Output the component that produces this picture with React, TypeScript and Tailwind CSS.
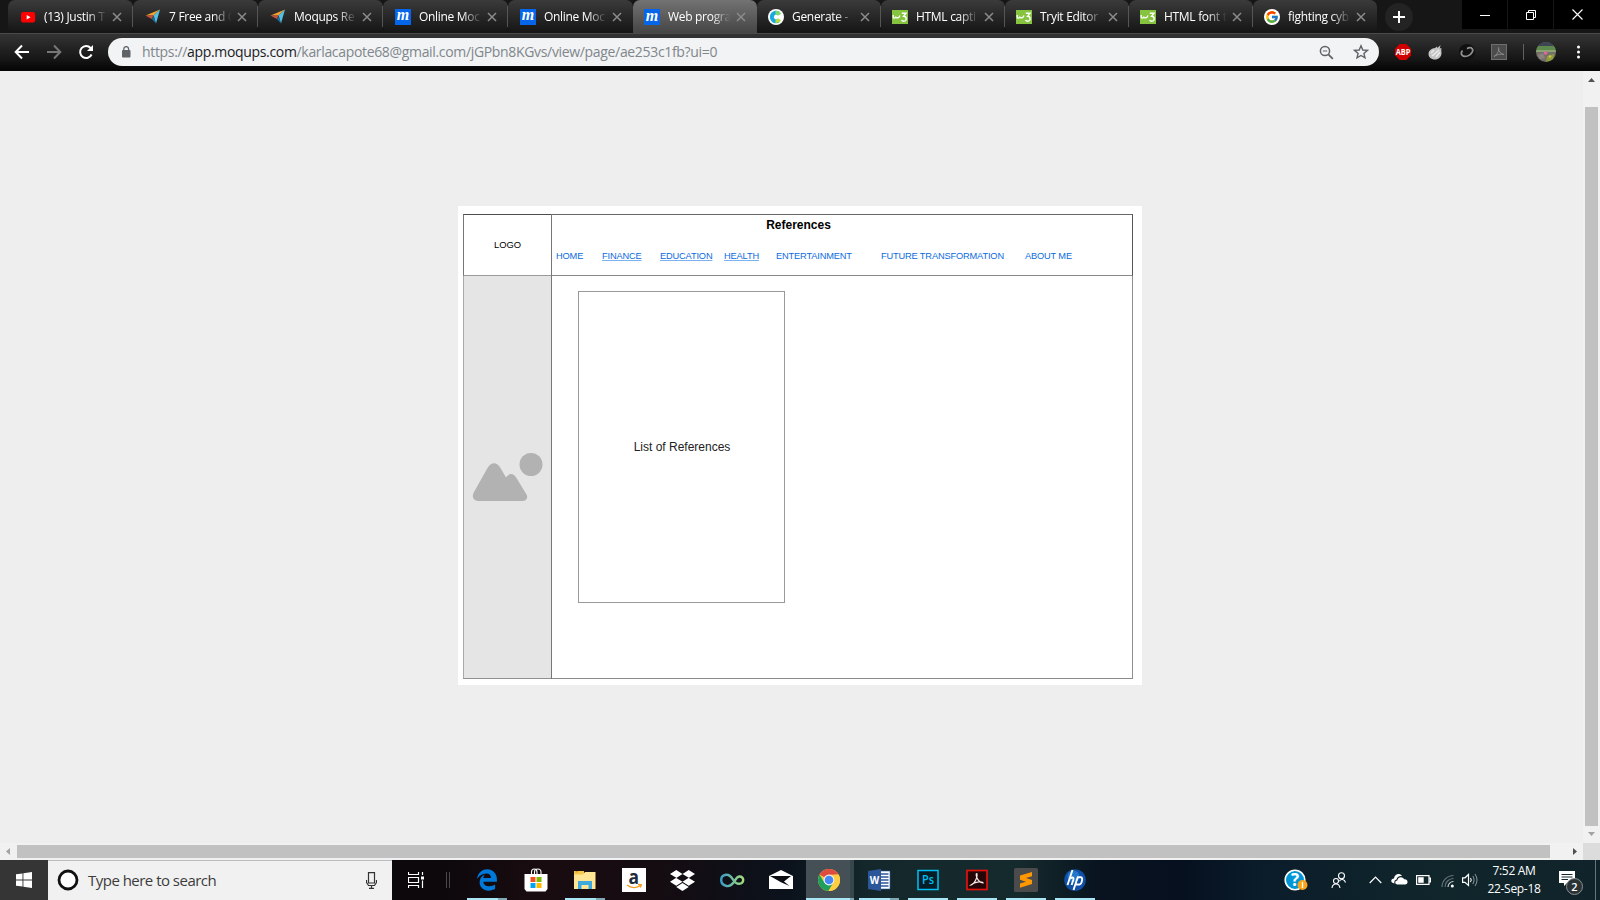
import React from 'react';
import { FaDropbox } from 'react-icons/fa';
import { FaEdgeLegacy } from 'react-icons/fa6';
import { FcGoogle } from 'react-icons/fc';

const UI = "font-['Open_Sans','Noto_Sans',sans-serif]";

function YouTube() {
  return (
    <svg width="16" height="16" viewBox="0 0 16 16">
      <rect x="1" y="3" width="14.2" height="10.6" rx="2.4" fill="#f00" />
      <path d="M6.7 6 L10.6 8.3 L6.7 10.6Z" fill="#fff" />
    </svg>
  );
}

function Plane() {
  return (
    <svg width="16" height="16" viewBox="0 0 16 16">
      <path d="M0.5 6.5 L15 0.5 L8.5 6.5Z" fill="#f5a033" />
      <path d="M0.5 6.5 L8.5 6.5 L6.8 10Z" fill="#c9513a" />
      <path d="M15 0.5 L8.5 6.5 L9 8 L11 14.5Z" fill="#52c0e4" />
      <path d="M9 7.5 L6.8 10 L11 14.5Z" fill="#1c6f9c" />
    </svg>
  );
}

function Moqups() {
  return (
    <span className="flex size-4 items-center justify-center bg-[#0566ea] pb-[3px] font-['Liberation_Serif',serif] text-[16px] leading-none font-bold text-white italic">
      m
    </span>
  );
}

function Generate() {
  return (
    <svg width="16" height="16" viewBox="0 0 16 16">
      <circle cx="8" cy="8" r="8" fill="#fff" />
      <path d="M10.5 4.4 A4.3 4.3 0 1 0 10.5 11.6" fill="none" stroke="#19a9e0" strokeWidth="4" />
      <path d="M7.5 3.8 A4.3 4.3 0 0 1 11.6 5.8" fill="none" stroke="#7fd86a" strokeWidth="4" />
      <path d="M7.5 12.2 A4.3 4.3 0 0 0 11.6 10.2" fill="none" stroke="#b9dd3c" strokeWidth="3.6" />
    </svg>
  );
}

function W3() {
  return (
    <svg width="16" height="16" viewBox="0 0 16 16">
      <rect y="1" width="16" height="14" fill="#86c440" />
      <path d="M1.2 6 V8 C1.2 9.6 3.6 9.6 3.8 7.5 C4.1 9.6 6.8 9.6 8 6.5" fill="none" stroke="#fff" strokeWidth="1.3" />
      <path d="M9.8 4.2 H14 L11.6 7.2 C15 7.2 15 12.2 11.8 12.2 C10.7 12.2 10 11.8 9.6 11" fill="none" stroke="#fff" strokeWidth="1.4" />
    </svg>
  );
}

function Google() {
  return (
    <span className="flex size-4 items-center justify-center rounded-full bg-white">
      <FcGoogle size={14} />
    </span>
  );
}

const tabs = [
  { icon: <YouTube />, title: '(13) Justin T' },
  { icon: <Plane />, title: '7 Free and C' },
  { icon: <Plane />, title: 'Moqups Re' },
  { icon: <Moqups />, title: 'Online Moc' },
  { icon: <Moqups />, title: 'Online Moc' },
  { icon: <Moqups />, title: 'Web progra', active: true },
  { icon: <Generate />, title: 'Generate -' },
  { icon: <W3 />, title: 'HTML capti' },
  { icon: <W3 />, title: 'Tryit Editor' },
  { icon: <W3 />, title: 'HTML font t' },
  { icon: <Google />, title: 'fighting cyb' },
];

function Tab({ icon, title, active, wide, sep }: { icon: React.ReactNode; title: string; active?: boolean; wide: boolean; sep: boolean }) {
  return (
    <div
      className={
        'flex shrink-0 items-center rounded-t-[7px] ' +
        (wide ? 'w-[125px] pl-3 ' : 'w-[124px] pl-[11px] ') +
        (active ? 'h-[34px] bg-linear-to-b from-[#737373] to-[#444]' : 'h-[33px] rounded-b-[7px] bg-linear-to-b from-[#3b3b3b] to-[#151515]')
      }
    >
      <span className="flex w-4 shrink-0">{icon}</span>
      <span className="ml-2 w-[64px] mask-r-from-68% mask-r-to-98% text-[12px] leading-4 tracking-[-0.3px] whitespace-nowrap text-white">
        {title}
      </span>
      <svg className="ml-1 shrink-0" width="10" height="10" viewBox="0 0 10 10">
        <path d="M1 1 L9 9 M9 1 L1 9" stroke="#8c8c8c" strokeWidth="1.5" />
      </svg>
      <span className={'ml-auto w-px ' + (sep ? 'h-[21px] bg-[#555]' : '')} />
    </div>
  );
}

function TabStrip() {
  return (
    <div className="flex h-[33px] bg-[#161616] pl-2">
      {tabs.map((t, i) => (
        <Tab key={i} icon={t.icon} title={t.title} active={t.active} wide={i < 5} sep={i !== 4 && i !== 5 && i !== 10} />
      ))}
      <div className="mt-[3px] ml-2 flex size-7 items-center justify-center rounded-full bg-[#232323]">
        <svg width="12" height="12" viewBox="0 0 12 12">
          <path d="M6 0 V12 M0 6 H12" stroke="#fff" strokeWidth="2" />
        </svg>
      </div>
      <div className="ml-auto flex h-[29px] gap-px">
        <div className="flex w-[45px] items-center justify-center bg-black">
          <svg width="10" height="10" viewBox="0 0 10 10">
            <path d="M0 5.5 H10" stroke="#fff" />
          </svg>
        </div>
        <div className="flex w-[45px] items-center justify-center bg-black">
          <svg width="10" height="10" viewBox="0 0 10 10">
            <path d="M0.5 2.5 H7.5 V9.5 H0.5Z M2.5 2.5 V0.5 H9.5 V7.5 H7.5" fill="none" stroke="#fff" />
          </svg>
        </div>
        <div className="flex w-[46px] items-center justify-center bg-black">
          <svg width="11" height="11" viewBox="0 0 11 11">
            <path d="M0.5 0.5 L10.5 10.5 M10.5 0.5 L0.5 10.5" stroke="#fff" strokeWidth="1.1" />
          </svg>
        </div>
      </div>
    </div>
  );
}

function Toolbar() {
  return (
    <div className="flex h-[38px] items-center border-t border-[#4a4a4a] bg-linear-to-b from-[#323232] from-5% via-[#151515] via-70% to-[#050505] pb-px pl-[14px]">
      <svg width="16" height="16" viewBox="0 0 16 16">
        <path d="M15 8 H2 M8 1.5 L1.7 8 L8 14.5" fill="none" stroke="#fff" strokeWidth="2" />
      </svg>
      <svg className="ml-4" width="16" height="16" viewBox="0 0 16 16">
        <path d="M1 8 H14 M8 1.5 L14.3 8 L8 14.5" fill="none" stroke="#777" strokeWidth="2" />
      </svg>
      <svg className="ml-4" width="16" height="16" viewBox="0 0 16 16">
        <path d="M13.6 10.5 A6 6 0 1 1 12.6 4" fill="none" stroke="#fff" strokeWidth="2" />
        <path d="M15 1 V7 H9Z" fill="#fff" />
      </svg>
      <div className="ml-[14px] flex h-7 w-[1271px] items-center rounded-full bg-[#f1f3f4] pl-[13px]">
        <svg width="10" height="12" viewBox="0 0 10 12">
          <rect x="1" y="4" width="8.5" height="7.5" rx="1" fill="#5f6368" />
          <path d="M2.8 4.5 V3 A2.4 2.4 0 0 1 7.6 3 V4.5" fill="none" stroke="#5f6368" strokeWidth="1.3" />
        </svg>
        <span className="ml-[11px] text-[14px] leading-5 tracking-[-0.333px] whitespace-nowrap text-[#80868b]">
          https://<span className="text-[#202124]">app.moqups.com</span>/karlacapote68@gmail.com/jGPbn8KGvs/view/page/ae253c1fb?ui=0
        </span>
        <svg className="ml-auto" width="15" height="15" viewBox="0 0 15 15">
          <circle cx="6" cy="6" r="4.6" fill="none" stroke="#5f6368" strokeWidth="1.5" />
          <path d="M9.3 9.3 L13.8 13.8" stroke="#5f6368" strokeWidth="1.8" />
          <path d="M3.8 6 H8.2" stroke="#5f6368" />
        </svg>
        <svg className="mr-[10px] ml-[19px]" width="16" height="16" viewBox="0 0 16 16">
          <path d="M8 1.8 L9.8 6 L14.4 6.4 L10.9 9.4 L12 13.9 L8 11.5 L4 13.9 L5.1 9.4 L1.6 6.4 L6.2 6Z" fill="none" stroke="#5f6368" strokeWidth="1.4" />
        </svg>
      </div>
      <div className="ml-4 flex items-center">
        <svg width="16" height="16" viewBox="0 0 16 16">
          <path d="M4.7 0 H11.3 L16 4.7 V11.3 L11.3 16 H4.7 L0 11.3 V4.7Z" fill="#d00000" />
          <text x="8" y="11" textAnchor="middle" fontSize="8" fontWeight="bold" fill="#fff" textLength="14.6" lengthAdjust="spacingAndGlyphs" fontFamily="Open Sans, sans-serif">ABP</text>
        </svg>
        <svg className="ml-4" width="16" height="16" viewBox="0 0 16 16">
          <path d="M1.5 10 C1.5 6 5 4.5 8 4 L10 2.5 L10.5 4 L13.5 1 L12.8 4.5 L14.5 4 C14 6 14.5 7 14.5 9 C14.5 13 11.5 15.5 8 15.5 C4 15.5 1.5 13 1.5 10Z" fill="#c4c4c4" />
          <path d="M4 9 L7 6 M5 12 L12 6 M9 13 L13 8" stroke="#ececec" strokeWidth="1.4" />
        </svg>
        <svg className="ml-4" width="16" height="16" viewBox="0 0 16 16">
          <circle cx="8" cy="8" r="8" fill="#101010" />
          <path d="M3.5 6.5 C0.5 10 3.5 13.5 8.5 12 C13.5 10.3 15.2 5.5 12.4 3.9 C10.8 3.2 9.2 3.8 8 4.7" fill="none" stroke="#909090" strokeWidth="1.7" />
        </svg>
        <svg className="ml-4" width="16" height="16" viewBox="0 0 16 16">
          <rect x="0.5" y="0.5" width="15" height="15" fill="#4c4c4c" stroke="#6e6e6e" />
          <path d="M3 12.5 C6 11 8.3 6.5 7.7 3.5 C7 3.5 7.5 9.5 13 10.5 C10 9.3 5 10.8 3 12.5" fill="none" stroke="#8b8b8b" />
        </svg>
        <span className="ml-4 h-4 w-px bg-[#606060]" />
        <svg className="ml-3" width="20" height="20" viewBox="0 0 20 20">
          <clipPath id="avatar">
            <circle cx="10" cy="10" r="10" />
          </clipPath>
          <g clipPath="url(#avatar)">
            <rect width="20" height="20" fill="#77706a" />
            <rect width="20" height="4" fill="#3d4454" />
            <rect y="4" width="20" height="4.5" fill="#5d8a4c" />
            <path d="M0 8 H20 V10 H0Z" fill="#8aa374" />
            <path d="M2 13 L7 11 L9 16 L4 17Z" fill="#8c8480" />
            <path d="M11 14 L18 12 L17 18 L10 20Z" fill="#8c9c3c" />
            <circle cx="9.5" cy="11" r="1.8" fill="#e0699b" />
            <circle cx="14" cy="14.5" r="1.3" fill="#d3c445" />
          </g>
        </svg>
        <svg className="ml-5" width="5" height="14" viewBox="0 0 5 14">
          <circle cx="2.5" cy="2" r="1.5" fill="#fff" />
          <circle cx="2.5" cy="7" r="1.5" fill="#fff" />
          <circle cx="2.5" cy="12" r="1.5" fill="#fff" />
        </svg>
      </div>
    </div>
  );
}

function Wireframe() {
  return (
    <div className="h-[479px] w-[684px] bg-white pt-[8px] pl-[5px] font-['Liberation_Sans',sans-serif] text-black">
      <div className="flex h-[465px] w-[670px]">
        <div className="flex w-[88px] flex-col">
          <div className="flex h-[62px] items-center justify-center border-t border-b border-l border-t-[#4d4d4d] border-b-[#999] border-l-[#777] text-[9.4px]">
            <span>LOGO</span>
          </div>
          <div className="flex-1 border-b border-l border-b-[#8f8f8f] border-l-[#aaa] bg-[#e5e5e5] pt-[176px] pl-[7px]">
            <svg width="72" height="50" viewBox="0 0 72 50">
              <circle cx="60" cy="12.5" r="11.5" fill="#b2b2b2" />
              <path d="M8 49 C2 49 0.5 44.5 3 40 L16.5 16 C20 9.5 26 9.5 29.5 16 L35 25.5 C38.5 20.5 42.5 21 45.5 26 L55.5 42.5 C57.5 46 55 49 51.5 49Z" fill="#b2b2b2" />
            </svg>
          </div>
        </div>
        <div className="flex w-[582px] shrink-0 flex-col border-l border-[#777]">
          <div className="h-[62px] border-t border-r border-b border-t-[#666] border-r-[#555] border-b-[#888]">
            <div className="pt-[3px] pr-[87px] text-center text-[12px] leading-[14px] font-bold">References</div>
            <div className="mt-[19px] flex text-[9.25px] leading-[11px] tracking-[-0.15px] whitespace-nowrap text-[#0a6be0] [&>span]:shrink-0">
              <span className="ml-1 w-[46px]">HOME</span>
              <span className="w-[58px] underline decoration-[#7db2f0]">FINANCE</span>
              <span className="w-[64px] underline decoration-[#7db2f0]">EDUCATION</span>
              <span className="w-[52px] underline decoration-[#7db2f0]">HEALTH</span>
              <span className="w-[105px]">ENTERTAINMENT</span>
              <span className="w-[144px]">FUTURE TRANSFORMATION</span>
              <span>ABOUT ME</span>
            </div>
          </div>
          <div className="flex-1 border-r border-b border-r-[#8f8f8f] border-b-[#8a8a8a] pt-[15px] pl-[26px]">
            <div className="flex h-[312px] w-[207px] items-center justify-center border border-[#999] pl-px text-[12px] text-[#222]">
              <span>List of References</span>
            </div>
          </div>
        </div>
      </div>
    </div>
  );
}

function Viewport() {
  return (
    <div className="flex h-[789px] flex-col">
      <div className="flex h-[772px]">
        <div className="flex-1 bg-[#eee] pt-[135px] pl-[458px]">
          <Wireframe />
        </div>
        <div className="flex w-[17px] flex-col items-center bg-[#f1f1f1]">
          <svg width="17" height="36" viewBox="0 0 17 36">
            <path d="M5 11 L8.5 7 L12 11Z" fill="#505050" />
          </svg>
          <div className="h-[719px] w-[13px] bg-[#c1c1c1]" />
          <svg width="17" height="17" viewBox="0 0 17 17">
            <path d="M5 6 L8.5 10 L12 6Z" fill="#a3a3a3" />
          </svg>
        </div>
      </div>
      <div className="flex h-[17px] items-center bg-[#f1f1f1]">
        <svg width="17" height="17" viewBox="0 0 17 17">
          <path d="M10 5 L6 8.5 L10 12Z" fill="#a3a3a3" />
        </svg>
        <div className="h-[13px] w-[1533px] bg-[#c1c1c1]" />
        <svg className="ml-4" width="17" height="17" viewBox="0 0 17 17">
          <path d="M7 5 L11 8.5 L7 12Z" fill="#505050" />
        </svg>
        <div className="h-[17px] w-[17px] bg-[#dcdcdc]" />
      </div>
    </div>
  );
}

function Store() {
  return (
    <svg width="24" height="24" viewBox="0 0 24 24">
      <path d="M7.5 8 V4 C7.5 0 13 0 13 4 V8 M10.5 6 V4 C10.5 0 17 0 17 4 V7" fill="none" stroke="#fff" strokeWidth="1.1" />
      <path d="M0.5 6 H23.5 V21 L21.5 23.5 H2.5 L0.5 21Z" fill="#fff" />
      <path d="M6.5 9 H11.5 V14 H6.5Z" fill="#f25022" />
      <path d="M12.5 9 H17.5 V14 H12.5Z" fill="#7fba00" />
      <path d="M6.5 15 H11.5 V20 H6.5Z" fill="#00a4ef" />
      <path d="M12.5 15 H17.5 V20 H12.5Z" fill="#ffb900" />
    </svg>
  );
}

function Explorer() {
  return (
    <svg width="24" height="24" viewBox="0 0 24 24">
      <path d="M1 3 H11 V5 H22 V21 H1Z" fill="#f5c84c" />
      <path d="M1 6.5 H10 L12 4 H22.5 V21 H1Z" fill="#ffe594" />
      <path d="M2.5 3.8 H5" stroke="#d78e12" />
      <path d="M5 21 V13 H19 V21 H15.5 V17 H8.5 V21Z" fill="#3da9dd" />
    </svg>
  );
}

function Amazon() {
  return (
    <svg width="24" height="24" viewBox="0 0 24 24">
      <rect width="24" height="24" fill="#fff" />
      <text x="11.8" y="15.5" textAnchor="middle" fontSize="20" fontWeight="bold" fill="#1d2b3a" textLength="10.5" lengthAdjust="spacingAndGlyphs" fontFamily="Open Sans, sans-serif">a</text>
      <path d="M5 17 C9 20.3 15 20.3 18.5 17.6 M16 16.5 L19.3 16.8 L18.3 19.5" fill="none" stroke="#f79a1c" strokeWidth="1.3" />
    </svg>
  );
}

function InfinityLoop() {
  return (
    <svg width="26" height="24" viewBox="0 0 26 24">
      <defs>
        <linearGradient id="inf" x1="0" x2="1">
          <stop offset="0" stopColor="#3c9dc4" />
          <stop offset="1" stopColor="#a3dc7d" />
        </linearGradient>
      </defs>
      <path d="M14.5 14.5 C12 18 9 18.3 7.5 18 C0.5 16.5 0.5 7.5 7 6.8 C14 6 13.5 16 20 15.8 C25.5 15.5 25.5 8.5 20.5 8.5 C17.5 8.5 16.5 12 14.5 14.5Z" fill="none" stroke="url(#inf)" strokeWidth="2.4" />
    </svg>
  );
}

function Mail() {
  return (
    <svg width="24" height="24" viewBox="0 0 24 24">
      <path d="M0 8 L12 2 L24 8 V21 H0Z" fill="#fff" />
      <path d="M1 8 H22 L15 13.5 L20.5 18 L12 14.3Z" fill="#0c0d14" />
    </svg>
  );
}

function Chrome() {
  return (
    <svg className="ml-[3px]" width="22" height="22" viewBox="0 0 22 22">
      <circle cx="11" cy="11" r="11" fill="#ffcd40" />
      <path d="M11 11 L1.5 5.5 A11 11 0 0 1 20.5 5.5 L11 5.8Z" fill="#de4c3f" />
      <path d="M1.5 5.5 A11 11 0 0 0 10.5 22 L15.5 13.5 L11 11 L6.5 13.7Z" fill="#1da05c" />
      <path d="M20.5 5.5 A11 11 0 0 1 10.5 22 L15.6 13.5 L15 6Z" fill="#ffcd40" />
      <circle cx="11" cy="11" r="5.4" fill="#f1f1f1" />
      <circle cx="11" cy="11" r="4.3" fill="#4587f4" />
    </svg>
  );
}

function Word() {
  return (
    <svg width="24" height="24" viewBox="0 0 24 24">
      <rect x="12" y="3" width="11" height="18" fill="#fff" stroke="#2b579a" strokeWidth="0.6" />
      <path d="M14 6 H21.5 M14 9 H21.5 M14 12 H21.5 M14 15 H21.5 M14 18 H21.5" stroke="#2b579a" strokeWidth="1.3" />
      <path d="M1 3 L14 1 V23 L1 21Z" fill="#2b579a" />
      <text x="7.5" y="16" textAnchor="middle" fontSize="11" fontWeight="bold" fill="#fff" textLength="9.5" lengthAdjust="spacingAndGlyphs" fontFamily="Open Sans, sans-serif">W</text>
    </svg>
  );
}

function Photoshop() {
  return (
    <svg width="22" height="22" viewBox="0 0 22 22">
      <rect x="1" y="1.5" width="20" height="19" fill="#051d26" stroke="#00c0f3" strokeWidth="1.5" />
      <text x="11" y="15.3" textAnchor="middle" fontSize="12" fontWeight="600" fill="#00c0f3" textLength="12" lengthAdjust="spacingAndGlyphs" fontFamily="Open Sans, sans-serif">Ps</text>
    </svg>
  );
}

function Acrobat() {
  return (
    <svg width="22" height="22" viewBox="0 0 22 22">
      <rect x="1" y="1.5" width="20" height="19" fill="#250505" stroke="#e2130c" strokeWidth="1.7" />
      <path d="M5 16 C8 15.5 12 8.5 10.8 4.5 C9.3 4.5 10.5 12.5 17 14 C17.5 12 9 12.5 5 16Z" fill="none" stroke="#f3e9e9" strokeWidth="1.2" />
    </svg>
  );
}

function Sublime() {
  return (
    <svg width="24" height="24" viewBox="0 0 24 24">
      <rect width="24" height="24" rx="1.5" fill="#4b4b4b" />
      <path d="M6 7.5 L18 4 V8.2 L12 10 L18 12 V16 L6 19.8 V15.5 L12 13.7 L6 11.8Z" fill="#ff9800" />
    </svg>
  );
}

function Hp() {
  return (
    <svg width="22" height="22" viewBox="0 0 22 22">
      <circle cx="11" cy="11" r="10.8" fill="#0f4fa5" />
      <circle cx="9.5" cy="7.5" r="6" fill="#2377cb" />
      <path d="M8.5 1 L3.5 16 M6 9.5 C9.5 7.5 10 9 9.3 11 L7.6 16 M14 7.5 L9.5 21 M13.5 8.3 H17 C19.5 8.3 17.5 15.5 15.5 15.5 H12" fill="none" stroke="#fff" strokeWidth="1.9" />
    </svg>
  );
}

type AppEntry = { icon: React.ReactNode; run?: 'single' | 'multi' | 'active' };
const apps: AppEntry[] = [
  { icon: <FaEdgeLegacy size={22} color="#0078d7" />, run: 'multi' },
  { icon: <Store /> },
  { icon: <Explorer />, run: 'multi' },
  { icon: <Amazon /> },
  { icon: <FaDropbox size={25} color="#fff" /> },
  { icon: <InfinityLoop /> },
  { icon: <Mail /> },
  { icon: <Chrome />, run: 'active' },
  { icon: <Word />, run: 'multi' },
  { icon: <Photoshop />, run: 'single' },
  { icon: <Acrobat />, run: 'single' },
  { icon: <Sublime />, run: 'single' },
  { icon: <Hp />, run: 'single' },
];

function AppButton({ icon, run }: AppEntry) {
  return (
    <div className="flex h-10 w-[49px] shrink-0 flex-col items-center">
      <div className={'flex h-[38px] w-[48px] items-center justify-center pt-[2px] ' + (run === 'active' ? 'border-r-4 border-[#36474c] bg-[#454f56]' : '')}>
        {icon}
      </div>
      {run === 'single' && <div className="h-[2px] w-10 bg-[#a8e6f5]" />}
      {run === 'multi' && <div className="h-[2px] w-10 border-r-9 border-[#7fa9b5] bg-[#a8e6f5]" />}
      {run === 'active' && <div className="h-[2px] w-12 border-r-4 border-[#7fa9b5] bg-[#a8e6f5]" />}
    </div>
  );
}

function Taskbar() {
  return (
    <div className="flex h-10 bg-[linear-gradient(to_right,#0c080c_0px,#0c080c_440px,#190c10_540px,#140c11_660px,#0b121c_790px,#14282b_870px,#152a2c_1020px,#08131f_1100px,#06101f_1180px,#0a1c2a_1260px,#10262b_1440px,#10232a_1600px)]">
      <div className="flex w-12 items-center justify-center bg-[#353535]">
        <svg width="16" height="16" viewBox="0 0 16 16">
          <path d="M0 2.3 L6.5 1.4 V7.6 H0Z M7.4 1.2 L16 0 V7.6 H7.4Z M0 8.4 H6.5 V14.6 L0 13.7Z M7.4 8.4 H16 V16 L7.4 14.8Z" fill="#fff" />
        </svg>
      </div>
      <div className="flex w-[344px] items-center border-t border-[#bbb] bg-[#f1f1f1] pb-px pl-[9px]">
        <svg width="22" height="22" viewBox="0 0 22 22">
          <circle cx="11" cy="11" r="9" fill="#fff" stroke="#111" strokeWidth="2.8" />
        </svg>
        <span className="ml-[9px] pb-px text-[15px] leading-5 tracking-[-0.52px] whitespace-nowrap text-[#3c3c3c]">Type here to search</span>
        <svg className="mr-[15px] ml-auto" width="11" height="17" viewBox="0 0 11 17">
          <path d="M2.5 0.6 H8.5 V11 H2.5Z M0.5 8 V10.5 L2.5 13.5 H8.5 L10.5 10.5 V8 M5.5 13.5 V16 M3 16.4 H8" fill="none" stroke="#333" strokeWidth="1.2" />
        </svg>
      </div>
      <div className="flex w-[70px] items-center pl-4">
        <svg width="17" height="16" viewBox="0 0 17 16">
          <path d="M0.5 0 V2.5 H10.5 V0 M0.5 5.5 H10.5 V10.5 H0.5Z M0.5 16 V13.5 H10.5 V16 M14.5 0 V3 M14.5 8.5 V16" fill="none" stroke="#fff" strokeWidth="1.2" />
          <rect x="13" y="4.5" width="3" height="3" fill="#fff" />
        </svg>
        <span className="ml-[21px] h-4 w-1 border-x border-[#4a484b]" />
      </div>
      {apps.map((a, i) => (
        <AppButton key={i} {...a} />
      ))}
      <div className="ml-auto flex items-center text-white">
        <svg width="24" height="22" viewBox="0 0 24 22">
          <circle cx="11" cy="11" r="9.8" fill="#0096d6" stroke="#fff" strokeWidth="1.6" />
          <text x="11" y="17" textAnchor="middle" fontSize="17" fontWeight="bold" fill="#fff" fontFamily="Open Sans, sans-serif">?</text>
          <circle cx="18.5" cy="16" r="5" fill="#f9a51a" />
          <path d="M18.5 13 V19" stroke="#fff" strokeWidth="1.3" />
        </svg>
        <svg className="ml-[23px]" width="16" height="17" viewBox="0 0 16 17">
          <circle cx="10.5" cy="3.8" r="3" fill="none" stroke="#fff" strokeWidth="1.1" />
          <circle cx="5" cy="9" r="2.5" fill="none" stroke="#fff" strokeWidth="1.1" />
          <path d="M8.5 9.3 C9.5 6.5 13.5 7 14.5 10.5 M1 16 C1.5 11 8 10.5 9 16" fill="none" stroke="#fff" strokeWidth="1.1" />
        </svg>
        <svg className="ml-[22px]" width="13" height="8" viewBox="0 0 13 8">
          <path d="M0.7 7 L6.5 1.2 L12.3 7" fill="none" stroke="#fff" strokeWidth="1.2" />
        </svg>
        <svg className="mb-[2px] ml-[9px]" width="17" height="12" viewBox="0 0 17 12">
          <path d="M3.5 10.5 C-1 10 -0.5 5.5 3 5.5 C3.5 1 8.5 -0.5 11 3 C8 2.5 6 4 5.5 6.5 C3.5 7 3 9 3.5 10.5Z" fill="#fff" />
          <path d="M6.5 11.5 C3.5 11.5 3.5 7.8 6.3 7.5 C7 3.5 11.5 3 13.3 6.3 C17.5 6 17.5 11.5 14 11.5Z" fill="#fff" />
        </svg>
        <svg className="ml-[8px]" width="15" height="10" viewBox="0 0 15 10">
          <path d="M0.6 0.6 H13 V9.4 H0.6Z M13 3 H14.4 V7 H13" fill="none" stroke="#fff" strokeWidth="1.2" />
          <rect x="2.2" y="2.2" width="5.5" height="5.6" fill="#fff" />
        </svg>
        <svg className="mt-[2px] ml-[10px]" width="13" height="14" viewBox="0 0 13 14">
          <path d="M1 13 A11.5 11.5 0 0 1 12.5 1.5 M4 13 A8.5 8.5 0 0 1 12.5 4.5" fill="none" stroke="#66757b" strokeWidth="1.1" />
          <path d="M7 13 A5.5 5.5 0 0 1 12.5 7.5" fill="none" stroke="#cfd6d8" strokeWidth="1.1" />
          <circle cx="11.3" cy="12" r="1.5" fill="#fff" />
        </svg>
        <svg className="ml-[8px]" width="17" height="14" viewBox="0 0 17 14">
          <path d="M0.6 4.8 H3 L6.5 1.5 V12.5 L3 9.3 H0.6Z" fill="none" stroke="#fff" strokeWidth="1.2" />
          <path d="M8.5 5 Q10 7 8.5 9" fill="none" stroke="#fff" strokeWidth="1.1" />
          <path d="M10.8 3 Q13.3 7 10.8 11 M13 1 Q17 7 13 13" fill="none" stroke="#7d8a8f" strokeWidth="1.1" />
        </svg>
        <div className="ml-1 flex w-[62px] flex-col items-center text-[12px] leading-[18px] tracking-[-0.3px] whitespace-nowrap">
          <span>7:52 AM</span>
          <span>22-Sep-18</span>
        </div>
        <svg className="mt-[6px] ml-[13px]" width="26" height="26" viewBox="0 0 26 26">
          <path d="M1 1 H17 V13 H9 L6 16 V13 H1Z" fill="#fff" />
          <path d="M3.5 4.5 H14.5 M3.5 7 H14.5 M3.5 9.5 H10" stroke="#14242a" />
          <circle cx="16.5" cy="16.5" r="8" fill="#2b3236" stroke="#8a8f91" />
          <text x="16.5" y="20.5" textAnchor="middle" fontSize="11" fontWeight="600" fill="#fff" fontFamily="Open Sans, sans-serif">2</text>
        </svg>
        <span className="mr-1 ml-[11px] h-10 w-px bg-[#66757b]" />
      </div>
    </div>
  );
}

export default function App() {
  return (
    <div className={'flex h-[900px] w-[1600px] flex-col overflow-hidden ' + UI}>
      <TabStrip />
      <Toolbar />
      <Viewport />
      <Taskbar />
    </div>
  );
}
